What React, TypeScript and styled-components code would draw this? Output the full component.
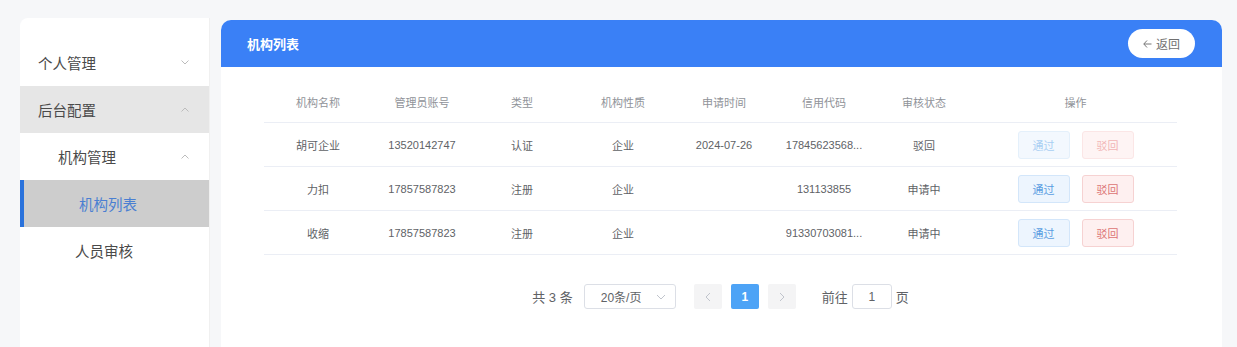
import styled, { createGlobalStyle } from "styled-components";

const GlobalStyle = createGlobalStyle`
  html, body {
    margin: 0;
    padding: 0;
    background: #f6f7f9;
  }
  body {
    font-family: "Liberation Sans", "Noto Sans CJK SC", sans-serif;
  }
`;

type Org = {
  name: string;
  account: string;
  type: string;
  nature: string;
  date: string;
  code: string;
  status: string;
  locked: boolean;
};

const rows: Org[] = [
  { name: "胡可企业", account: "13520142747", type: "认证", nature: "企业", date: "2024-07-26", code: "17845623568...", status: "驳回", locked: true },
  { name: "力扣", account: "17857587823", type: "注册", nature: "企业", date: "", code: "131133855", status: "申请中", locked: false },
  { name: "收缩", account: "17857587823", type: "注册", nature: "企业", date: "", code: "91330703081...", status: "申请中", locked: false },
];

const columns = [
  { title: "机构名称", width: 108 },
  { title: "管理员账号", width: 100 },
  { title: "类型", width: 100 },
  { title: "机构性质", width: 102 },
  { title: "申请时间", width: 100 },
  { title: "信用代码", width: 100 },
  { title: "审核状态", width: 100 },
  { title: "操作", width: 203 },
];

const Chevron = ({ up }: { up?: boolean }) => (
  <svg width="8" height="5" viewBox="0 0 8 5" fill="none">
    <polyline
      points={up ? "0.5,4.5 4,1 7.5,4.5" : "0.5,0.5 4,4 7.5,0.5"}
      stroke="#bcbcbc"
      strokeWidth="1"
    />
  </svg>
);

const SmallArrow = ({ dir }: { dir: "left" | "right" | "down" }) => {
  const pts = dir === "left" ? "5,1 1,5 5,9" : dir === "right" ? "1,1 5,5 1,9" : "1,1 5,5 9,1";
  return (
    <svg width={dir === "down" ? 10 : 6} height={dir === "down" ? 6 : 10} viewBox={dir === "down" ? "0 0 10 6" : "0 0 6 10"} fill="none">
      <polyline points={pts} stroke="#c0c4cc" strokeWidth="1" />
    </svg>
  );
};

const App = () => {
  return (
    <>
      <GlobalStyle />
      <Page>
        <Sidebar>
          <MenuItem $indent={18}>
            <span>个人管理</span>
            <Chevron />
          </MenuItem>
          <MenuItem $indent={18} $variant="open">
            <span>后台配置</span>
            <Chevron up />
          </MenuItem>
          <MenuItem $indent={38}>
            <span>机构管理</span>
            <Chevron up />
          </MenuItem>
          <MenuItem $indent={55} $variant="active">
            <span>机构列表</span>
          </MenuItem>
          <MenuItem $indent={55}>
            <span>人员审核</span>
          </MenuItem>
        </Sidebar>

        <Card>
          <CardHeader>
            <Title>机构列表</Title>
            <BackButton>
              <svg width="9" height="8" viewBox="0 0 9 8" fill="none">
                <polyline points="4,0.5 0.8,4 4,7.5" stroke="#777" strokeWidth="1" />
                <line x1="0.8" y1="4" x2="8.5" y2="4" stroke="#777" strokeWidth="1" />
              </svg>
              返回
            </BackButton>
          </CardHeader>

          <Body>
            <Table>
              <colgroup>
                {columns.map((c) => (
                  <col key={c.title} style={{ width: c.width }} />
                ))}
              </colgroup>
              <thead>
                <tr>
                  {columns.map((c) => (
                    <Th key={c.title}>{c.title}</Th>
                  ))}
                </tr>
              </thead>
              <tbody>
                {rows.map((r) => (
                  <tr key={r.name}>
                    <Td>{r.name}</Td>
                    <Td>{r.account}</Td>
                    <Td>{r.type}</Td>
                    <Td>{r.nature}</Td>
                    <Td>{r.date}</Td>
                    <Td>{r.code}</Td>
                    <Td>{r.status}</Td>
                    <Td>
                      <Actions>
                        <ActionButton $kind="pass" $disabled={r.locked}>通过</ActionButton>
                        <ActionButton $kind="reject" $disabled={r.locked}>驳回</ActionButton>
                      </Actions>
                    </Td>
                  </tr>
                ))}
              </tbody>
            </Table>

            <Pagination>
              <Total>共 3 条</Total>
              <SizeSelect>
                <span>20条/页</span>
                <SmallArrow dir="down" />
              </SizeSelect>
              <PageButton>
                <SmallArrow dir="left" />
              </PageButton>
              <PageButton $active>1</PageButton>
              <PageButton>
                <SmallArrow dir="right" />
              </PageButton>
              <Jumper>
                前往
                <JumpInput>1</JumpInput>
                页
              </Jumper>
            </Pagination>
          </Body>
        </Card>
      </Page>
    </>
  );
};

export default App;

const Page = styled.div`
  display: flex;
  gap: 11px;
  height: 100vh;
  box-sizing: border-box;
  padding: 18px 15px 0 20px;
  overflow: hidden;
`;

const Sidebar = styled.nav`
  width: 190px;
  flex-shrink: 0;
  background: #ffffff;
  border-top-left-radius: 8px;
  border-right: 1px solid #f0f0f0;
  box-sizing: border-box;
  padding-top: 21px;
`;

const MenuItem = styled.div<{ $indent: number; $variant?: "open" | "active" }>`
  height: 47px;
  display: flex;
  align-items: center;
  justify-content: space-between;
  padding: 0 20px 0 ${({ $indent }) => $indent}px;
  font-size: 14.5px;
  color: ${({ $variant }) => ($variant === "active" ? "#4a7fd2" : "#4a4a4a")};
  background: ${({ $variant }) =>
    $variant === "open" ? "#e6e6e6" : $variant === "active" ? "#cdcdcd" : "transparent"};
  border-left: ${({ $variant }) => ($variant === "active" ? "4px solid #2a72dc" : "none")};
`;

const Card = styled.main`
  flex: 1;
  margin-top: 2px;
  background: #ffffff;
  border-radius: 10px 10px 0 0;
  display: flex;
  flex-direction: column;
`;

const CardHeader = styled.header`
  height: 47px;
  display: flex;
  align-items: center;
  justify-content: space-between;
  padding: 0 27px 0 26px;
  background: #3a80f6;
  border-radius: 10px 10px 0 0;
`;

const Title = styled.h1`
  margin: 0;
  font-size: 13px;
  font-weight: bold;
  color: #ffffff;
`;

const BackButton = styled.button`
  width: 67px;
  height: 29px;
  border: none;
  border-radius: 15px;
  background: #ffffff;
  color: #707070;
  font-family: inherit;
  font-size: 12px;
  display: flex;
  align-items: center;
  justify-content: center;
  gap: 4px;
  padding: 0;
`;

const Body = styled.section`
  padding: 15px 45px 0 43px;
`;

const Table = styled.table`
  width: 913px;
  table-layout: fixed;
  border-collapse: collapse;
`;

const Th = styled.th`
  height: 40px;
  padding: 0 10px;
  font-size: 11px;
  font-weight: normal;
  color: #909399;
  text-align: center;
  border-bottom: 1px solid #ebeef5;
`;

const Td = styled.td`
  height: 43px;
  padding: 0 10px;
  font-size: 11px;
  font-weight: normal;
  color: #606266;
  text-align: center;
  white-space: nowrap;
  overflow: hidden;
  text-overflow: ellipsis;
  border-bottom: 1px solid #ebeef5;
`;

const Actions = styled.div`
  display: flex;
  justify-content: center;
  gap: 12px;
`;

const ActionButton = styled.span<{ $kind: "pass" | "reject"; $disabled?: boolean }>`
  width: 52px;
  height: 28px;
  box-sizing: border-box;
  display: inline-flex;
  align-items: center;
  justify-content: center;
  border-radius: 3px;
  font-size: 11px;
  border: 1px solid
    ${({ $kind, $disabled }) =>
      $kind === "pass" ? ($disabled ? "#e4f0fb" : "#d3e6fa") : $disabled ? "#fbe6e6" : "#f6d2d2"};
  background: ${({ $kind, $disabled }) =>
    $kind === "pass" ? ($disabled ? "#f3f8fe" : "#edf5fe") : $disabled ? "#fef4f4" : "#fef0f0"};
  color: ${({ $kind, $disabled }) =>
    $kind === "pass" ? ($disabled ? "#a9cff3" : "#5a9ee2") : $disabled ? "#f2b6b6" : "#dc7474"};
`;

const Pagination = styled.div`
  margin-top: 29px;
  display: flex;
  justify-content: center;
  align-items: center;
  color: #606266;
  font-size: 13px;
`;

const Total = styled.span`
  margin-right: 11px;
`;

const SizeSelect = styled.div`
  width: 92px;
  height: 25px;
  box-sizing: border-box;
  border: 1px solid #dcdfe6;
  border-radius: 3px;
  display: flex;
  align-items: center;
  justify-content: space-between;
  padding: 0 9px 0 16px;
  font-size: 12px;
  margin-right: 18px;
`;

const PageButton = styled.div<{ $active?: boolean }>`
  width: 28px;
  height: 25px;
  border-radius: 2px;
  display: flex;
  align-items: center;
  justify-content: center;
  margin-right: 9px;
  font-size: 12px;
  font-weight: bold;
  background: ${({ $active }) => ($active ? "#4da3f6" : "#f4f4f5")};
  color: ${({ $active }) => ($active ? "#ffffff" : "#c0c4cc")};
`;

const Jumper = styled.div`
  display: flex;
  align-items: center;
  gap: 4px;
  margin-left: 17px;
`;

const JumpInput = styled.div`
  width: 40px;
  height: 25px;
  box-sizing: border-box;
  border: 1px solid #dcdfe6;
  border-radius: 3px;
  display: flex;
  align-items: center;
  justify-content: center;
  font-size: 12px;
`;
